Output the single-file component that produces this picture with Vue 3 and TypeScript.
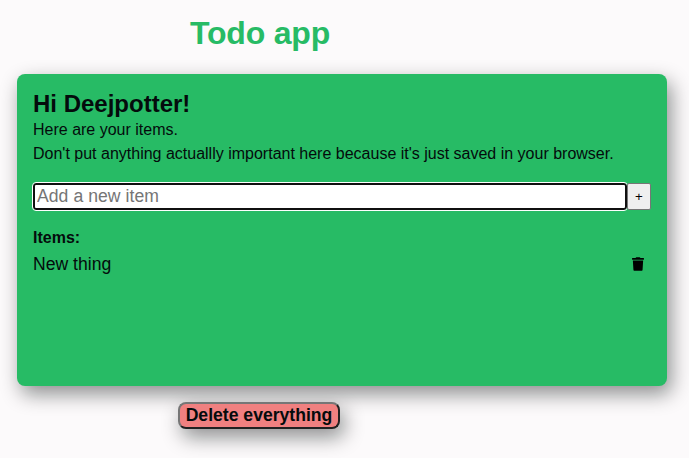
<script setup lang="ts">
import { ref } from 'vue'

const draft = ref('')
const items = ref<string[]>(['New thing'])

function addItem() {
  const text = draft.value.trim()
  if (!text) return
  items.value.push(text)
  draft.value = ''
}

function removeItem(index: number) {
  items.value.splice(index, 1)
}

function clearItems() {
  items.value = []
}
</script>

<template>
  <main class="page">
    <h1 class="title">Todo app</h1>
    <section class="card">
      <h2 class="greeting">Hi Deejpotter!</h2>
      <p class="text">Here are your items.</p>
      <p class="text">Don't put anything actuallly important here because it's just saved in your browser.</p>
      <form class="add" @submit.prevent="addItem">
        <input v-model="draft" class="field" type="text" placeholder="Add a new item" />
        <button class="plus" type="submit">+</button>
      </form>
      <h3 class="subtitle">Items:</h3>
      <ul class="list">
        <li v-for="(item, index) in items" :key="index" class="item">
          <span>{{ item }}</span>
          <button class="trash" type="button" aria-label="Delete" @click="removeItem(index)">
            <svg viewBox="0 0 448 512" width="12" height="14">
              <path d="M432 32H312l-9.400-18.700A24 24 0 0 0 281.100 0H166.800a23.700 23.700 0 0 0-21.400 13.300L136 32H16A16 16 0 0 0 0 48v32a16 16 0 0 0 16 16h416a16 16 0 0 0 16-16V48a16 16 0 0 0-16-16zM53.200 467a48 48 0 0 0 47.900 45h245.800a48 48 0 0 0 47.900-45L416 128H32z" />
            </svg>
          </button>
        </li>
      </ul>
    </section>
    <button class="clear" type="button" @click="clearItems">Delete everything</button>
  </main>
</template>

<style>
body {
  background: #fcfafb;
}
</style>

<style scoped>
.page {
  box-sizing: border-box;
  height: 458px;
  padding: 14px 22px 0 17px;
  display: flex;
  flex-direction: column;
  align-items: flex-start;
  overflow: hidden;
  font-family: "Liberation Sans", Arial, sans-serif;
  font-size: 16px;
  color: #040b0c;
}
h1, h2, h3, p, ul {
  margin: 0;
  padding: 0;
}
.title {
  margin-left: 173px;
  font-size: 32px;
  line-height: 38px;
  letter-spacing: -0.2px;
  color: #27bb65;
}
.card {
  box-sizing: border-box;
  width: 650px;
  height: 312px;
  margin-top: 22px;
  padding: 16px;
  border-radius: 8px;
  background: #27bb65;
  box-shadow: 4px 8px 20px rgba(4, 11, 12, 0.45);
}
.greeting {
  font-size: 24px;
  line-height: 28px;
}
.text {
  line-height: 24px;
  white-space: nowrap;
}
.add {
  display: flex;
  width: 618px;
  height: 27px;
  margin-top: 17px;
}
.field {
  box-sizing: border-box;
  width: 594px;
  height: 27px;
  padding: 1px 2px;
  border: 2px solid #101010;
  border-radius: 3px;
  outline: 1px solid #fff;
  background: #fff;
  font: 17.6px "Liberation Sans", Arial, sans-serif;
}
.field::placeholder {
  color: #757575;
  letter-spacing: 0.05px;
}
.plus {
  box-sizing: border-box;
  width: 24px;
  height: 27px;
  padding: 0;
  border: 1px solid #767676;
  border-radius: 2px;
  background: #efefef;
  font: 13.333px "Liberation Sans", Arial, sans-serif;
  color: #000;
}
.subtitle {
  margin-top: 16px;
  font-size: 16px;
  line-height: 24px;
}
.list {
  list-style: none;
}
.item {
  display: flex;
  justify-content: space-between;
  align-items: center;
  height: 28px;
  font-size: 17.6px;
}
.trash {
  display: flex;
  padding: 0;
  margin-right: 7px;
  border: 0;
  background: none;
  color: #000;
}
.trash svg {
  fill: currentColor;
}
.clear {
  box-sizing: border-box;
  width: 162px;
  height: 27px;
  margin: 16px 0 0 161px;
  padding: 0;
  border: 2px solid;
  border-color: #767676 #212121 #212121 #767676;
  border-radius: 8px;
  background: #f08080;
  box-shadow: 4px 8px 20px rgba(4, 11, 12, 0.45);
  font: bold 17.6px "Liberation Sans", Arial, sans-serif;
  color: #040b0c;
  white-space: nowrap;
}
</style>
